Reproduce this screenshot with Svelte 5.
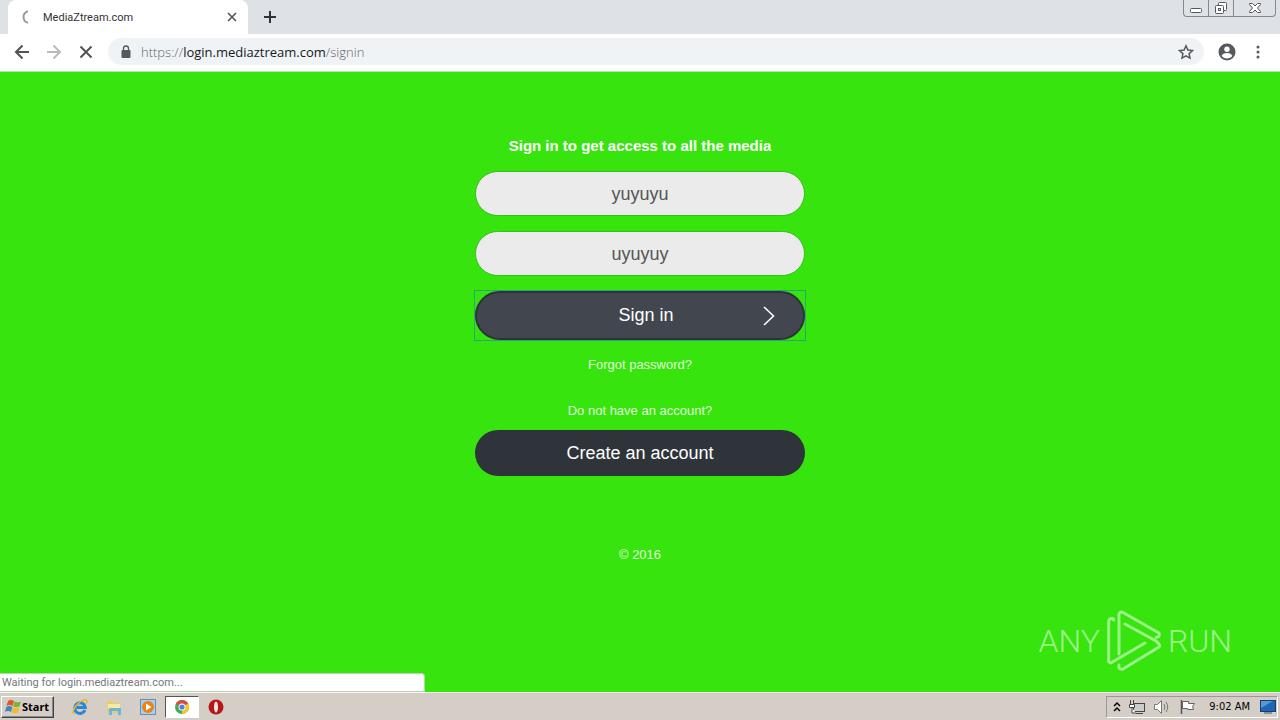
<script>
  let user = $state('yuyuyu');
  let pass = $state('uyuyuy');
</script>

<svelte:head><title>MediaZtream.com</title></svelte:head>

<div class="screen">
  <header class="tabs">
    <div class="tab">
      <svg class="spin" width="14" height="14" viewBox="0 0 14 14"><path d="M8 1.2A6 6 0 0 0 8 12.8" fill="none" stroke="#999c9f" stroke-width="2" /></svg>
      <span class="title">MediaZtream.com</span>
      <button class="plain" aria-label="Close tab"><svg width="10" height="10" viewBox="0 0 10 10"><path d="M1 1l8 8M9 1l-8 8" stroke="#55585c" stroke-width="1.7" /></svg></button>
    </div>
    <button class="plain new" aria-label="New tab"><svg width="12" height="12" viewBox="0 0 12 12"><path d="M6 0v12M0 6h12" stroke="#2f3337" stroke-width="2" /></svg></button>
    <div class="winctl">
      <button aria-label="Minimize"><svg width="14" height="14" viewBox="0 0 14 14"><rect x="1.5" y="7.5" width="11" height="4" rx="1" fill="#fff" stroke="#55595f" /></svg></button>
      <button aria-label="Restore"><svg width="14" height="14" viewBox="0 0 14 14"><rect x="4.500" y="1.500" width="8" height="8" rx="1" fill="#fff" stroke="#55595f" /><rect x="1.500" y="4.500" width="8" height="8" rx="1" fill="#fff" stroke="#55595f" /><rect x="4.500" y="7.500" width="2" height="2" fill="none" stroke="#55595f" /></svg></button>
      <button aria-label="Close"><svg width="14" height="14" viewBox="0 0 14 14"><path d="M1.500 2.500h3L7 5l2.500-2.500h3v1L9.500 7l3 3.500v1h-3L7 9l-2.500 2.500h-3v-1L4.500 7l-3-3.500z" fill="#fff" stroke="#55595f" /></svg></button>
    </div>
  </header>

  <nav class="toolbar">
    <button class="plain" aria-label="Back"><svg width="16" height="16" viewBox="0 0 16 16"><path d="M15 8H2M8.500 1.500L2 8l6.500 6.500" fill="none" stroke="#505357" stroke-width="2" /></svg></button>
    <button class="plain" aria-label="Forward"><svg width="16" height="16" viewBox="0 0 16 16"><path d="M1 8h13M7.500 1.500L14 8l-6.500 6.500" fill="none" stroke="#b9bbbe" stroke-width="2" /></svg></button>
    <button class="plain" aria-label="Stop"><svg width="16" height="16" viewBox="0 0 16 16"><path d="M2.500 2.500l11 11M13.500 2.500l-11 11" stroke="#505357" stroke-width="2" /></svg></button>
    <div class="omni">
      <svg width="10" height="14" viewBox="0 0 10 14"><rect x="0.500" y="5" width="9" height="8" rx="1" fill="#55585c" /><path d="M2.500 6V3.500a2.500 2.500 0 0 1 5 0V6" fill="none" stroke="#55585c" stroke-width="1.300" /></svg>
      <span class="url">https://<b>login.mediaztream.com</b>/signin</span>
      <button class="plain" aria-label="Bookmark"><svg width="16" height="16" viewBox="0 0 16 16"><path d="M8 1.800l1.900 4.200 4.600.5-3.400 3.100.9 4.500L8 11.800l-4 2.300.9-4.500L1.500 6.500l4.600-.5z" fill="none" stroke="#55585c" stroke-width="1.500" /></svg></button>
    </div>
    <button class="plain" aria-label="Profile"><svg width="18" height="18" viewBox="0 0 18 18"><circle cx="9" cy="9" r="8.500" fill="#55585c" /><circle cx="9" cy="6.200" r="2.700" fill="#fff" /><path d="M3.600 12.700c1-2 3.500-2.700 5.400-2.700s4.400.7 5.400 2.700a6.500 6.500 0 0 1-10.800 0z" fill="#fff" /></svg></button>
    <button class="plain menu" aria-label="Menu"><svg width="4" height="14" viewBox="0 0 4 14" fill="#55585c"><circle cx="2" cy="2" r="1.500" /><circle cx="2" cy="7" r="1.500" /><circle cx="2" cy="12" r="1.500" /></svg></button>
  </nav>

  <main>
    <form onsubmit={(e) => e.preventDefault()}>
      <h1>Sign in to get access to all the media</h1>
      <div class="fields">
        <input type="text" aria-label="Username" bind:value={user} />
        <input type="text" aria-label="Password" bind:value={pass} />
      </div>
      <div class="focus">
        <button class="signin"><span>Sign in</span><svg width="12" height="20" viewBox="0 0 12 20"><path d="M1 1l9.500 9L1 19" fill="none" stroke="#fff" stroke-width="1.600" /></svg></button>
      </div>
      <a class="forgot" href="#forgot">Forgot password?</a>
      <p>Do not have an account?</p>
      <button class="create" type="button">Create an account</button>
      <footer>© 2016</footer>
    </form>
    <div class="mark">
      <span>ANY</span>
      <svg width="58" height="66" viewBox="0 0 58 66" fill="none" stroke="#fff" stroke-width="3" stroke-linejoin="round" stroke-linecap="round"><path d="M14 46V6q1-3 4-1.500L54 25q1.500 4-3 4.500" /><path d="M8.700 12q0-2-2.500-1.500Q3.700 11 3.700 14v40l2 1L40 35" /><path d="M20 16l31 17q5 4 3 6L18 61q-5 1-4-4" /></svg>
      <span>RUN</span>
    </div>
    <div class="status">Waiting for login.mediaztream.com...</div>
  </main>

  <div class="taskbar">
    <button class="start">
      <svg width="18" height="16" viewBox="0 0 18 16"><path d="M4 2q3-2 6 0L8.500 7Q5.500 5 2.500 7z" fill="#e2562a" /><path d="M10.500 2.500q3 1.500 6.500 0L15.500 7.500q-3.500 1.500-6.500 0z" fill="#7fb43a" /><path d="M2.300 8q3-2 6 0L7 13q-3-2-6 0z" fill="#3d85c8" /><path d="M8.800 8.500q3 1.500 6.500 0l-1.300 5q-3.500 1.500-6.500 0z" fill="#f2b92c" /></svg>
      Start
    </button>
    <button class="task" aria-label="Internet Explorer"><svg width="18" height="18" viewBox="0 0 18 18"><path d="M14 12A5.300 5.300 0 1 1 14.300 9.500H5.500" fill="none" stroke="#2d86d2" stroke-width="3" /><path d="M3 16C-1 13 9 1 15 2q2 1 0 4" fill="none" stroke="#e5b82c" stroke-width="1.500" /></svg></button>
    <button class="task" aria-label="Explorer"><svg width="18" height="18" viewBox="0 0 18 18"><path d="M2 3h5l1 2h7v10H2z" fill="#e9cd69" /><path d="M3 6h12v5H3z" fill="#f7e8a5" /><path d="M4 17v-6q0-1 1-1h10q1 0 1 1v6h-3v-4H7v4z" fill="#6bb6df" /></svg></button>
    <button class="task" aria-label="Media Player"><svg width="18" height="18" viewBox="0 0 18 18"><rect x="1.500" y="1.500" width="15" height="15" fill="#a9cfee" stroke="#5a93c5" /><circle cx="9" cy="9" r="6" fill="#ee8113" /><path d="M7 5.500v7L12.500 9z" fill="#fff" /></svg></button>
    <button class="task active" aria-label="Chrome"><svg width="16" height="16" viewBox="0 0 16 16"><circle cx="8" cy="8" r="7" fill="#4aa853" /><path d="M8 8L1.900 4.500A7 7 0 0 1 14.100 4.500z" fill="#dd4b3e" /><path d="M8 8l6.100-3.500A7 7 0 0 1 8 15z" fill="#f7c52d" /><circle cx="8" cy="8" r="3.500" fill="#fff" /><circle cx="8" cy="8" r="2.600" fill="#4485e8" /></svg></button>
    <button class="task" aria-label="Opera"><svg width="16" height="16" viewBox="0 0 16 16"><circle cx="8" cy="8" r="7.500" fill="#b5161b" /><ellipse cx="8" cy="8" rx="2" ry="5.500" fill="#f4e4e0" /></svg></button>
    <div class="tray">
      <svg width="8" height="12" viewBox="0 0 8 12"><path d="M1 5l3-3 3 3M1 10l3-3 3 3" fill="none" stroke="#000" stroke-width="1.500" /></svg>
      <svg width="16" height="16" viewBox="0 0 16 16"><rect x="4.500" y="4.500" width="11" height="8" fill="#ccc" stroke="#444" /><path d="M7 14.500h7M1.500 1v4M4.500 1v4M.5 5.500h5v3h-5zM3 9v5h4" fill="#fff" stroke="#444" /></svg>
      <svg width="18" height="16" viewBox="0 0 18 16"><path d="M1.500 5.500h3l4-4v13l-4-4h-3z" fill="#fff" stroke="#777" /><path d="M11 5q2 3 0 6M13 3q3.500 5 0 10" fill="none" stroke="#777" /></svg>
      <svg width="18" height="16" viewBox="0 0 18 16"><path d="M2.500 1v14" stroke="#555" stroke-width="1.500" /><path d="M3.500 2.500h6v2h6l-2 3 1 3h-6v-1h-5z" fill="#fff" stroke="#666" /></svg>
      <time>9:02 AM</time>
      <svg width="16" height="14" viewBox="0 0 16 14"><rect x=".5" y=".5" width="15" height="11" fill="#1f66b5" stroke="#173e72" /><path d="M1 1h12L1 8z" fill="#559ad8" /><path d="M4 13h8" stroke="#456" /></svg>
    </div>
  </div>
</div>

<style>
  .screen { min-height: 100vh; display: flex; flex-direction: column; font-family: "Liberation Sans", Arial, sans-serif; }
  button { font: inherit; cursor: pointer; }
  .plain { border: 0; padding: 0; background: none; display: flex; align-items: center; justify-content: center; }
  svg { display: block; flex: none; }
  .tabs { height: 34px; background: #dee1e6; display: flex; align-items: flex-start; padding-left: 8px; }
  .tab { box-sizing: border-box; width: 240px; height: 34px; background: #fff; border-radius: 8px 8px 0 0; display: flex; align-items: center; padding: 0 11px 0 12px; gap: 9px; }
  .title { flex: 1; font: 11px Roboto, sans-serif; color: #333; }
  .new { margin: 11px 0 0 16px; }
  .winctl { margin-left: auto; margin-right: 4px; display: flex; height: 17px; box-sizing: border-box; border: 1px solid #85898f; border-top: 0; border-radius: 0 0 4px 4px; }
  .winctl button { width: 25px; padding: 0; border: 0; border-right: 1px solid #85898f; background: none; display: flex; justify-content: center; align-items: center; }
  .winctl button:last-child { width: 41px; border-right: 0; }
  .toolbar { box-sizing: border-box; height: 37px; background: #fff; display: flex; align-items: center; padding: 0 20px 2px 14px; gap: 16px; }
  .omni { flex: 1; height: 27px; margin: 0 -2px; border-radius: 14px; background: #f0f3f5; display: flex; align-items: center; padding: 0 10px 0 13px; gap: 10px; }
  .url { flex: 1; font: 300 13px "Open Sans", sans-serif; color: #5f6368; }
  .url b { font-weight: 400; color: #17191c; }
  .menu { margin-left: 4px; }
  main { flex: 1; background: #37e40e; border-top: 1px solid #b5e8a8; position: relative; display: flex; flex-direction: column; align-items: center; }
  form { width: 332px; display: flex; flex-direction: column; align-items: center; padding: 65px 16px 0; }
  h1 { margin: 0 0 17px; font-size: 15px; line-height: 17px; white-space: nowrap; color: #fff; }
  .fields { display: flex; flex-direction: column; gap: 15px; margin-bottom: 14px; }
  input { box-sizing: border-box; width: 330px; height: 45px; margin: 0; padding: 2px 2px 0; border: 1px solid #38bd1a; border-radius: 23px; background: #ebebeb; color: #555; text-align: center; font: 18px "Liberation Sans", Arial, sans-serif; outline: 0; }
  .focus { border: 1px solid #23a878; margin-bottom: 15px; }
  .signin, .create { box-sizing: border-box; width: 330px; border-radius: 25px; color: #fff; font-size: 18px; display: flex; align-items: center; justify-content: center; }
  .signin { height: 49px; background: #42474f; border: 2px solid #2d3339; padding: 0 28px 0 52px; }
  .signin span { flex: 1; }
  .forgot, p, footer { color: #e0fad8; font-size: 13px; line-height: 18px; text-decoration: none; margin: 0; }
  p { margin: 28px 0 10px; }
  .create { height: 46px; background: #2f343a; border: 0; }
  footer { margin-top: 70px; }
  .mark { position: absolute; right: 48px; bottom: 18px; display: flex; align-items: center; gap: 5px; opacity: .5; color: #fff; font: 300 32px Roboto, sans-serif; }
  .status { position: absolute; left: 0; bottom: 0; box-sizing: border-box; width: 425px; height: 19px; background: #fff; border: 1px solid #b5d9ac; border-left: 0; border-radius: 0 4px 0 0; padding-left: 2px; font: 11px/18px Roboto, sans-serif; color: #777; }
  .taskbar { box-sizing: border-box; height: 28px; background: #d5cec6; border-top: 1px solid #f8f5f2; display: flex; align-items: center; padding: 0 2px 0 1px; }
  .start { box-sizing: border-box; width: 53px; height: 22px; margin-right: 9px; padding: 0 2px; border: 1px solid; border-color: #fff #444 #444 #fff; box-shadow: inset -1px -1px #888; background: #d5cec6; display: flex; align-items: center; font: bold 11px "Noto Sans", sans-serif; }
  .task { box-sizing: border-box; width: 34px; height: 22px; border: 0; padding: 0; background: none; display: flex; align-items: center; justify-content: center; }
  .active { background: #fff; border: 1px solid; border-color: #555 #fff #fff #555; }
  .tray { margin-left: auto; box-sizing: border-box; height: 22px; border: 1px solid; border-color: #999 #fff #fff #999; display: flex; align-items: center; gap: 8px; padding: 0 1px 0 6px; }
  time { margin: 0 2px 0 4px; font: 11px "DejaVu Sans Condensed", "DejaVu Sans", sans-serif; color: #000; }
</style>
